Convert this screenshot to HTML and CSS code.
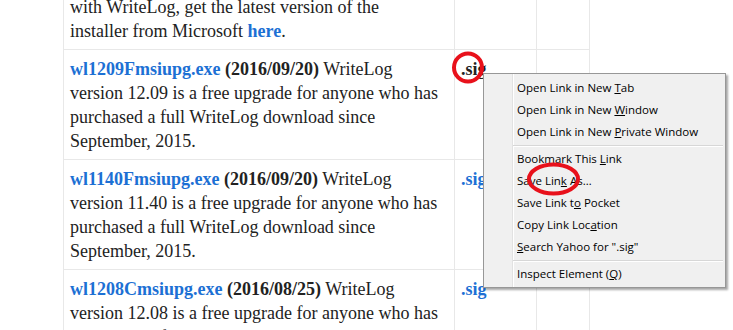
FILE: index.html
```html
<!DOCTYPE html>
<html lang="en">
<head>
    <meta charset="UTF-8">
    <title>WriteLog Downloads</title>
    <link rel="stylesheet" href="styles.css">
</head>
<body>
    <div class="page">
        <table class="downloads">
            <tr>
                <td class="desc">Windows Installer 4.5 is needed to work<br>
                    with WriteLog, get the latest version of the<br>
                    installer from Microsoft <a href="#">here</a>.</td>
                <td class="sig"></td>
                <td class="extra"></td>
            </tr>
            <tr>
                <td class="desc"><a href="#">wl1209Fmsiupg.exe</a> <b>(2016/09/20)</b> WriteLog
                    version 12.09 is a free upgrade for anyone who has
                    purchased a full WriteLog download since
                    September, 2015.</td>
                <td class="sig"><a href="#" class="active">.sig</a></td>
                <td class="extra"></td>
            </tr>
            <tr>
                <td class="desc"><a href="#">wl1140Fmsiupg.exe</a> <b>(2016/09/20)</b> WriteLog
                    version 11.40 is a free upgrade for anyone who has
                    purchased a full WriteLog download since
                    September, 2015.</td>
                <td class="sig"><a href="#">.sig</a></td>
                <td class="extra"></td>
            </tr>
            <tr>
                <td class="desc"><a href="#">wl1208Cmsiupg.exe</a> <b>(2016/08/25)</b> WriteLog
                    version 12.08 is a free upgrade for anyone who has
                    purchased a full WriteLog download since
                    September, 2015.</td>
                <td class="sig"><a href="#">.sig</a></td>
                <td class="extra"></td>
            </tr>
        </table>
    </div>

    <!-- Menu de contexto aberto sobre o link .sig -->
    <div class="context-menu">
        <div class="item">Open Link in New <u>T</u>ab</div>
        <div class="item">Open Link in New <u>W</u>indow</div>
        <div class="item">Open Link in New <u>P</u>rivate Window</div>
        <div class="separator"></div>
        <div class="item">Bookmark This <u>L</u>ink</div>
        <div class="item">Save Lin<u>k</u> As…</div>
        <div class="item">Save Link t<u>o</u> Pocket</div>
        <div class="item">Copy Link Loc<u>a</u>tion</div>
        <div class="item"><u>S</u>earch Yahoo for ".sig"</div>
        <div class="separator"></div>
        <div class="item">Inspect Element (<u>Q</u>)</div>
    </div>

    <!-- Marcações em vermelho -->
    <svg class="marks" width="733" height="330" viewBox="0 0 733 330">
        <circle cx="468" cy="67.5" r="14" fill="none" stroke="#e8111b" stroke-width="4"/>
        <ellipse cx="553.5" cy="179" rx="24.5" ry="14.5" fill="none" stroke="#e8111b" stroke-width="4"/>
    </svg>
</body>
</html>
```

FILE: styles.css
```css
body {
    margin: 0;
    background-color: #fff;
    font-family: 'Liberation Serif', 'Times New Roman', serif;
    color: #222;
    overflow: hidden;
}

.page {
    padding-left: 63px;
    margin-top: -37px;
}

.downloads {
    border-collapse: collapse;
    border-left: 1px solid #e8e8e8;
    font-size: 18px;
    line-height: 24px;
}

.downloads td {
    border: 1px solid #e8e8e8;
    border-left: none;
    vertical-align: top;
    padding: 7px 6px 6px 6px;
}

.desc {
    width: 378px;
}

.sig {
    width: 69px;
    padding-left: 7px;
}

.extra {
    width: 40px;
}

a {
    color: #1c70d4;
    font-weight: bold;
    text-decoration: none;
}

a.active {
    color: #222;
}

b {
    font-weight: bold;
}

.context-menu {
    position: absolute;
    left: 483px;
    top: 73px;
    width: 241px;
    padding: 3px 0 2px 0;
    background-color: #f0f0f0;
    border: 1px solid #979797;
    box-shadow: 2px 2px 2px rgba(0,0,0,0.35);
    font-family: 'Open Sans', 'Noto Sans', sans-serif;
    font-size: 11.5px;
    color: #000;
    background-image: linear-gradient(to right, transparent 28px, #e2e2e2 28px, #e2e2e2 29px, #fff 29px, #fff 30px, transparent 30px);
}

.item {
    height: 22px;
    line-height: 22px;
    padding-left: 33px;
    white-space: nowrap;
}

.separator {
    height: 5px;
    margin: 0 2px 0 29px;
    background: linear-gradient(to bottom, transparent 2px, #d7d7d7 2px, #d7d7d7 3px, #fff 3px, #fff 4px, transparent 4px);
}

.marks {
    position: absolute;
    left: 0;
    top: 0;
    pointer-events: none;
}
```
